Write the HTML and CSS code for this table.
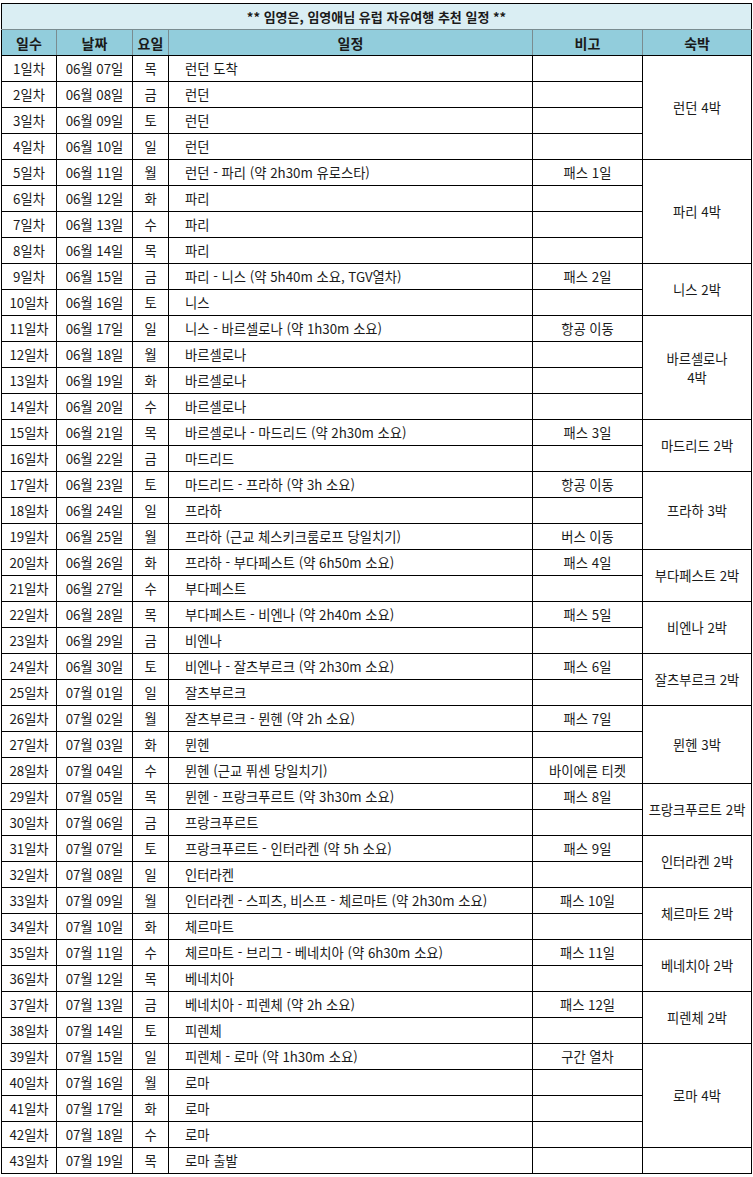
FILE: index.html
```html
<!DOCTYPE html>
<html lang="ko">
<head>
<meta charset="utf-8">
<title>유럽 자유여행 추천 일정</title>
<link rel="stylesheet" href="styles.css">
</head>
<body>
<table class="plan">
<colgroup>
<col class="c-day"><col class="c-date"><col class="c-wd"><col class="c-plan"><col class="c-note"><col class="c-stay">
</colgroup>
<thead>
<tr class="title-row"><th colspan="6">** 임영은, 임영애님 유럽 자유여행 추천 일정 **</th></tr>
<tr class="head-row"><th>일수</th><th>날짜</th><th>요일</th><th>일정</th><th>비고</th><th>숙박</th></tr>
</thead>
<tbody>
<tr><td>1일차</td><td>06월 07일</td><td>목</td><td class="plan-txt">런던 도착</td><td></td><td rowspan="4">런던 4박</td></tr>
<tr><td>2일차</td><td>06월 08일</td><td>금</td><td class="plan-txt">런던</td><td></td></tr>
<tr><td>3일차</td><td>06월 09일</td><td>토</td><td class="plan-txt">런던</td><td></td></tr>
<tr><td>4일차</td><td>06월 10일</td><td>일</td><td class="plan-txt">런던</td><td></td></tr>
<tr><td>5일차</td><td>06월 11일</td><td>월</td><td class="plan-txt">런던 - 파리 (약 2h30m 유로스타)</td><td>패스 1일</td><td rowspan="4">파리 4박</td></tr>
<tr><td>6일차</td><td>06월 12일</td><td>화</td><td class="plan-txt">파리</td><td></td></tr>
<tr><td>7일차</td><td>06월 13일</td><td>수</td><td class="plan-txt">파리</td><td></td></tr>
<tr><td>8일차</td><td>06월 14일</td><td>목</td><td class="plan-txt">파리</td><td></td></tr>
<tr><td>9일차</td><td>06월 15일</td><td>금</td><td class="plan-txt">파리 - 니스 (약 5h40m 소요, TGV열차)</td><td>패스 2일</td><td rowspan="2">니스 2박</td></tr>
<tr><td>10일차</td><td>06월 16일</td><td>토</td><td class="plan-txt">니스</td><td></td></tr>
<tr><td>11일차</td><td>06월 17일</td><td>일</td><td class="plan-txt">니스 - 바르셀로나 (약 1h30m 소요)</td><td>항공 이동</td><td rowspan="4" class="two-line">바르셀로나<br>4박</td></tr>
<tr><td>12일차</td><td>06월 18일</td><td>월</td><td class="plan-txt">바르셀로나</td><td></td></tr>
<tr><td>13일차</td><td>06월 19일</td><td>화</td><td class="plan-txt">바르셀로나</td><td></td></tr>
<tr><td>14일차</td><td>06월 20일</td><td>수</td><td class="plan-txt">바르셀로나</td><td></td></tr>
<tr><td>15일차</td><td>06월 21일</td><td>목</td><td class="plan-txt">바르셀로나 - 마드리드 (약 2h30m 소요)</td><td>패스 3일</td><td rowspan="2">마드리드 2박</td></tr>
<tr><td>16일차</td><td>06월 22일</td><td>금</td><td class="plan-txt">마드리드</td><td></td></tr>
<tr><td>17일차</td><td>06월 23일</td><td>토</td><td class="plan-txt">마드리드 - 프라하 (약 3h 소요)</td><td>항공 이동</td><td rowspan="3">프라하 3박</td></tr>
<tr><td>18일차</td><td>06월 24일</td><td>일</td><td class="plan-txt">프라하</td><td></td></tr>
<tr><td>19일차</td><td>06월 25일</td><td>월</td><td class="plan-txt">프라하 (근교 체스키크룸로프 당일치기)</td><td>버스 이동</td></tr>
<tr><td>20일차</td><td>06월 26일</td><td>화</td><td class="plan-txt">프라하 - 부다페스트 (약 6h50m 소요)</td><td>패스 4일</td><td rowspan="2">부다페스트 2박</td></tr>
<tr><td>21일차</td><td>06월 27일</td><td>수</td><td class="plan-txt">부다페스트</td><td></td></tr>
<tr><td>22일차</td><td>06월 28일</td><td>목</td><td class="plan-txt">부다페스트 - 비엔나 (약 2h40m 소요)</td><td>패스 5일</td><td rowspan="2">비엔나 2박</td></tr>
<tr><td>23일차</td><td>06월 29일</td><td>금</td><td class="plan-txt">비엔나</td><td></td></tr>
<tr><td>24일차</td><td>06월 30일</td><td>토</td><td class="plan-txt">비엔나 - 잘츠부르크 (약 2h30m 소요)</td><td>패스 6일</td><td rowspan="2">잘츠부르크 2박</td></tr>
<tr><td>25일차</td><td>07월 01일</td><td>일</td><td class="plan-txt">잘츠부르크</td><td></td></tr>
<tr><td>26일차</td><td>07월 02일</td><td>월</td><td class="plan-txt">잘츠부르크 - 뮌헨 (약 2h 소요)</td><td>패스 7일</td><td rowspan="3">뮌헨 3박</td></tr>
<tr><td>27일차</td><td>07월 03일</td><td>화</td><td class="plan-txt">뮌헨</td><td></td></tr>
<tr><td>28일차</td><td>07월 04일</td><td>수</td><td class="plan-txt">뮌헨 (근교 퓌센 당일치기)</td><td>바이에른 티켓</td></tr>
<tr><td>29일차</td><td>07월 05일</td><td>목</td><td class="plan-txt">뮌헨 - 프랑크푸르트 (약 3h30m 소요)</td><td>패스 8일</td><td rowspan="2">프랑크푸르트 2박</td></tr>
<tr><td>30일차</td><td>07월 06일</td><td>금</td><td class="plan-txt">프랑크푸르트</td><td></td></tr>
<tr><td>31일차</td><td>07월 07일</td><td>토</td><td class="plan-txt">프랑크푸르트 - 인터라켄 (약 5h 소요)</td><td>패스 9일</td><td rowspan="2">인터라켄 2박</td></tr>
<tr><td>32일차</td><td>07월 08일</td><td>일</td><td class="plan-txt">인터라켄</td><td></td></tr>
<tr><td>33일차</td><td>07월 09일</td><td>월</td><td class="plan-txt">인터라켄 - 스피츠, 비스프 - 체르마트 (약 2h30m 소요)</td><td>패스 10일</td><td rowspan="2">체르마트 2박</td></tr>
<tr><td>34일차</td><td>07월 10일</td><td>화</td><td class="plan-txt">체르마트</td><td></td></tr>
<tr><td>35일차</td><td>07월 11일</td><td>수</td><td class="plan-txt">체르마트 - 브리그 - 베네치아 (약 6h30m 소요)</td><td>패스 11일</td><td rowspan="2">베네치아 2박</td></tr>
<tr><td>36일차</td><td>07월 12일</td><td>목</td><td class="plan-txt">베네치아</td><td></td></tr>
<tr><td>37일차</td><td>07월 13일</td><td>금</td><td class="plan-txt">베네치아 - 피렌체 (약 2h 소요)</td><td>패스 12일</td><td rowspan="2">피렌체 2박</td></tr>
<tr><td>38일차</td><td>07월 14일</td><td>토</td><td class="plan-txt">피렌체</td><td></td></tr>
<tr><td>39일차</td><td>07월 15일</td><td>일</td><td class="plan-txt">피렌체 - 로마 (약 1h30m 소요)</td><td>구간 열차</td><td rowspan="4">로마 4박</td></tr>
<tr><td>40일차</td><td>07월 16일</td><td>월</td><td class="plan-txt">로마</td><td></td></tr>
<tr><td>41일차</td><td>07월 17일</td><td>화</td><td class="plan-txt">로마</td><td></td></tr>
<tr><td>42일차</td><td>07월 18일</td><td>수</td><td class="plan-txt">로마</td><td></td></tr>
<tr><td>43일차</td><td>07월 19일</td><td>목</td><td class="plan-txt">로마 출발</td><td></td><td></td></tr>
</tbody>
</table>
</body>
</html>
```

FILE: styles.css
```css
html, body {
  margin: 0;
  padding: 0;
  background: #ffffff;
}

body {
  padding: 3px 0 0 1px;
  font-family: "Noto Sans CJK KR", "Noto Sans", sans-serif;
  font-size: 13.3px;
  color: #1a1a1a;
}

.plan {
  border-collapse: collapse;
  table-layout: fixed;
  width: 750px;
}

.c-day { width: 55px; }
.c-date { width: 76px; }
.c-wd { width: 36px; }
.c-plan { width: 364px; }
.c-note { width: 110px; }
.c-stay { width: 109px; }

.plan th,
.plan td {
  border: 1px solid #000;
  height: 25px;
  padding: 0 2px;
  text-align: center;
  vertical-align: middle;
  line-height: 16px;
  white-space: nowrap;
  overflow: hidden;
}

.plan td.two-line {
  line-height: 19px;
}

.plan th {
  font-weight: bold;
  font-size: 13px;
  border-color: #7a8c90;
}

.title-row th {
  background: #daeef3;
  border-top-color: #000;
  border-left-color: #000;
  border-right-color: #000;
}

.head-row th {
  background: #92cddc;
  border-bottom-color: #000;
  font-size: 14px;
}

.head-row th:first-child { border-left-color: #000; }
.head-row th:last-child { border-right-color: #000; }

.plan td.plan-txt {
  text-align: left;
  padding-left: 16px;
}
```
